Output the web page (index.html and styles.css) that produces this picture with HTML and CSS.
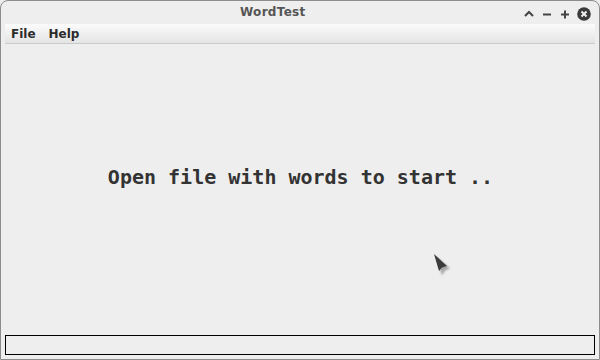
FILE: index.html
```html
<!DOCTYPE html>
<html lang="en">
<head>
    <meta charset="UTF-8">
    <title>WordTest</title>
    <link rel="stylesheet" href="styles.css">
</head>
<body>
    <div class="window">
        <div class="title-bar">
            <span class="title">WordTest</span>
            <div class="title-buttons">
                <svg class="btn" width="12" height="12" viewBox="0 0 12 12">
                    <path d="M2 8 L6 4 L10 8" fill="none" stroke="#444" stroke-width="2"/>
                </svg>
                <svg class="btn" width="12" height="12" viewBox="0 0 12 12">
                    <path d="M2 6.5 H10" fill="none" stroke="#444" stroke-width="2"/>
                </svg>
                <svg class="btn" width="12" height="12" viewBox="0 0 12 12">
                    <path d="M2 6.5 H10 M6 2.5 V10.5" fill="none" stroke="#444" stroke-width="2"/>
                </svg>
                <svg class="btn close" width="14" height="14" viewBox="0 0 14 14">
                    <circle cx="7" cy="7" r="6.8" fill="#3a3a3a"/>
                    <path d="M4.5 4.5 L9.5 9.5 M9.5 4.5 L4.5 9.5" stroke="#eee" stroke-width="2"/>
                </svg>
            </div>
        </div>
        <div class="frame">
            <div class="menu-bar">
                <span class="menu-item">File</span>
                <span class="menu-item">Help</span>
            </div>
            <div class="content">
                <p class="message">Open file with words to start ..</p>
                <svg class="pointer" width="22" height="24" viewBox="0 0 22 24">
                    <defs>
                        <filter id="shadow" x="-50%" y="-50%" width="200%" height="200%">
                            <feGaussianBlur stdDeviation="1.3"/>
                        </filter>
                    </defs>
                    <polygon points="2,2 16,14 11,16 8,21" fill="#000" opacity="0.3" filter="url(#shadow)" transform="translate(1,1.5)"/>
                    <polygon points="1,1 14,13 9,14.5 6,18" fill="#3c3c3c"/>
                </svg>
            </div>
            <div class="status-bar"></div>
        </div>
    </div>
</body>
</html>
```

FILE: styles.css
```css
html, body {
    margin: 0;
    padding: 0;
}
body {
    width: 600px;
    height: 360px;
    background-color: #eeeeee;
    font-family: "DejaVu Sans", sans-serif;
}
.window {
    box-sizing: border-box;
    width: 600px;
    height: 360px;
    border: 1px solid #8c8c8c;
    border-radius: 8px 8px 0 0;
    background-color: #eeeeee;
    display: flex;
    flex-direction: column;
}
.title-bar {
    height: 23px;
    position: relative;
    display: flex;
    align-items: center;
}
.title {
    position: absolute;
    left: 239px;
    top: 4px;
    font-size: 12px;
    font-weight: bold;
    color: #555;
    letter-spacing: 0.3px;
}
.title-buttons {
    margin-left: auto;
    margin-right: 8px;
    margin-top: 2px;
    display: flex;
    align-items: center;
    gap: 6px;
}
.frame {
    flex: 1;
    padding: 0 4px 4px 4px;
    display: flex;
    flex-direction: column;
}
.menu-bar {
    height: 19px;
    border-bottom: 1px solid #cacaca;
    background: linear-gradient(#fbfbfb, #e4e4e4);
    display: flex;
    align-items: center;
}
.menu-item {
    font-size: 12px;
    font-weight: bold;
    color: #2b2b2b;
    padding: 0 6px;
    margin-right: 1px;
}
.content {
    flex: 1;
    position: relative;
    display: flex;
    align-items: center;
    justify-content: center;
}
.message {
    margin: 0 0 26px 0;
    font-family: "DejaVu Sans Mono", monospace;
    font-size: 20px;
    font-weight: bold;
    color: #333;
    padding-left: 1px;
}
.pointer {
    position: absolute;
    left: 428px;
    top: 209px;
}
.status-bar {
    height: 18px;
    border: 1px solid #000;
}
```
